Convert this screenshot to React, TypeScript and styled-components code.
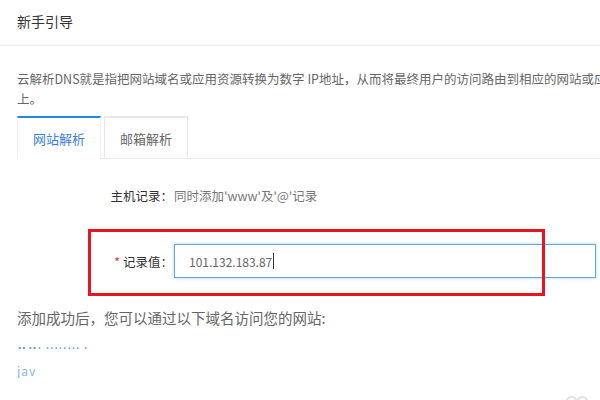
import styled, { createGlobalStyle } from "styled-components"

const GlobalStyle = createGlobalStyle`
    html, body {
      margin: 0;
      padding: 0;
      background: #ffffff;
      overflow: hidden;
    }
    body {
      font-family: "Noto Sans CJK SC", "Noto Sans", sans-serif;
    }
`

const Page = styled.div`
    position: relative;
    width: 700px;
    height: 400px;
    background: #ffffff;
    overflow: hidden;
`

const Header = styled.div`
    height: 46px;
    padding: 10px 17px 0 17px;
    box-sizing: border-box;
    border-bottom: 2px solid #f3f3f3;
`

const Title = styled.h1`
    margin: 0;
    font-size: 14px;
    line-height: 22px;
    font-weight: 400;
    color: #333333;
`

const Body = styled.div`
    padding: 23px 17px 0 17px;
`

const Description = styled.p`
    margin: 0;
    width: 630px;
    font-size: 12.5px;
    line-height: 20px;
    color: #666666;
`

const Tabs = styled.div`
    display: flex;
    margin-top: 7px;
    height: 42px;
    border-bottom: 1px solid #e9ecef;
`

const Tab = styled.div<{ $active?: boolean }>`
    display: flex;
    align-items: center;
    justify-content: center;
    width: 84px;
    box-sizing: border-box;
    margin-right: 3px;
    font-size: 13px;
    color: ${(p) => (p.$active ? "#3a7fd6" : "#666666")};
    background: #ffffff;
    border: 1px solid ${(p) => (p.$active ? "#f1f1f1" : "#e6e9ec")};
    border-top: 2px solid ${(p) => (p.$active ? "#1e88e5" : "#e6e9ec")};
    border-bottom: none;
    margin-bottom: ${(p) => (p.$active ? "-1px" : "0")};
`

const Form = styled.div`
    display: flex;
    flex-direction: column;
    gap: 32px;
    margin-top: 19px;
`

const FormRow = styled.div`
    position: relative;
    display: flex;
    align-items: center;
    height: 34px;
`

const Label = styled.div`
    width: 156px;
    padding-right: 1px;
    text-align: right;
    font-size: 12.5px;
    color: #333333;
`

const Required = styled.span`
    color: #e0363c;
    margin-right: 3px;
`

const Value = styled.div`
    font-size: 12.5px;
    color: #777777;
`

const FakeInput = styled.div`
    display: flex;
    align-items: center;
    width: 422px;
    height: 34px;
    box-sizing: border-box;
    padding: 0 14px;
    border: 1px solid #62a8e6;
    box-shadow: 0 0 3px rgba(98, 168, 230, 0.6);
    font-size: 12px;
    color: #666666;
`

const Caret = styled.span`
    display: inline-block;
    width: 1px;
    height: 16px;
    background: #333333;
    margin-left: 1px;
`

const Highlight = styled.div`
    position: absolute;
    left: 71px;
    top: -15px;
    width: 457px;
    height: 67px;
    box-sizing: border-box;
    border: 3px solid #e8141f;
    pointer-events: none;
`

const SuccessText = styled.div`
    margin-top: 30px;
    font-size: 14.5px;
    line-height: 20px;
    color: #666666;
`

const LinkClip = styled.div<{ $height: number; $gap: number }>`
    margin-top: ${(p) => p.$gap}px;
    height: ${(p) => p.$height}px;
    overflow: hidden;
    display: flex;
    align-items: flex-end;
`

const LinkText = styled.div<{ $faded?: boolean }>`
    font-size: 12px;
    line-height: 14px;
    color: #3a7fd6;
    opacity: ${(p) => (p.$faded ? 0.6 : 0.85)};
    white-space: nowrap;
    letter-spacing: 1px;
`

const Watermark = styled.svg`
    position: absolute;
    left: 564px;
    top: 389px;
`

export default function App() {
    return (
        <Page>
            <GlobalStyle />
            <Header>
                <Title>新手引导</Title>
            </Header>
            <Body>
                <Description>
                    云解析DNS就是指把网站域名或应用资源转换为数字 IP地址，从而将最终用户的访问路由到相应的网站或应用资源上。
                </Description>
                <Tabs>
                    <Tab $active>网站解析</Tab>
                    <Tab>邮箱解析</Tab>
                </Tabs>
                <Form>
                    <FormRow>
                        <Label>主机记录：</Label>
                        <Value>同时添加'www'及'@'记录</Value>
                    </FormRow>
                    <FormRow>
                        <Label>
                            <Required>*</Required>记录值：
                        </Label>
                        <FakeInput>
                            101.132.183.87
                            <Caret />
                        </FakeInput>
                        <Highlight />
                    </FormRow>
                </Form>
                <SuccessText>添加成功后，您可以通过以下域名访问您的网站:</SuccessText>
                <LinkClip $gap={19} $height={4}>
                    <LinkText>ww. ........ .</LinkText>
                </LinkClip>
                <LinkClip $gap={15} $height={12}>
                    <LinkText $faded>jav</LinkText>
                </LinkClip>
            </Body>
            <Watermark width="26" height="14" viewBox="0 0 26 14">
                <path d="M2 14 A5.5 6 0 0 1 13 14 A5.5 6 0 0 1 24 14" fill="none" stroke="#e2e2e2" strokeWidth="2" />
            </Watermark>
        </Page>
    )
}
